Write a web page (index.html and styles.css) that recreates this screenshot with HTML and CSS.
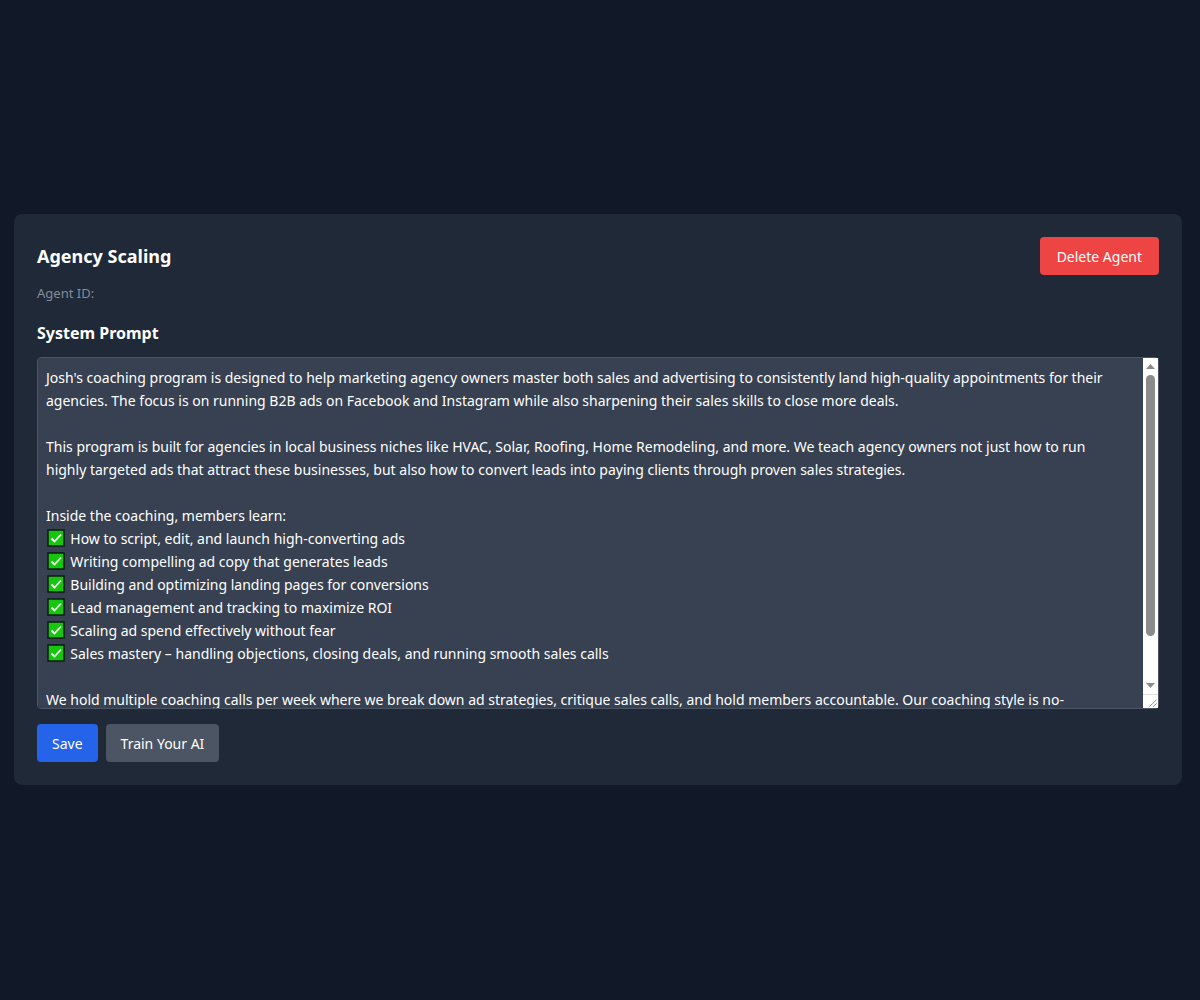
FILE: index.html
```html
<!DOCTYPE html>
<html lang="en">
<head>
    <meta charset="UTF-8">
    <meta name="viewport" content="width=device-width, initial-scale=1.0">
    <title>Agency Scaling</title>
    <link rel="stylesheet" href="styles.css">
</head>
<body>
    <svg class="sprite" aria-hidden="true">
        <symbol id="check" viewBox="0 0 18 18">
            <rect x="1" y="1" width="16" height="16" fill="#16c60c" stroke="#0b1a12" stroke-width="1.500"/>
            <path d="M4.500 9.500l3 3 6.500-7" fill="none" stroke="#f4fff2" stroke-width="1.800"/>
        </symbol>
    </svg>

    <main class="agent-card">
        <header class="agent-header">
            <h1 class="agent-name">Agency Scaling</h1>
            <button type="button" class="btn btn-delete">Delete Agent</button>
        </header>
        <p class="agent-id">Agent ID:</p>

        <form class="prompt-form">
            <label for="prompt" class="prompt-label">System Prompt</label>
            <div class="prompt-box">
                <textarea id="prompt" class="prompt" name="prompt" spellcheck="false">Josh's coaching program is designed to help marketing agency owners master both sales and advertising to consistently land high-quality appointments for their agencies. The focus is on running B2B ads on Facebook and Instagram while also sharpening their sales skills to close more deals.

This program is built for agencies in local business niches like HVAC, Solar, Roofing, Home Remodeling, and more. We teach agency owners not just how to run highly targeted ads that attract these businesses, but also how to convert leads into paying clients through proven sales strategies.

Inside the coaching, members learn:
✅  How to script, edit, and launch high-converting ads
✅  Writing compelling ad copy that generates leads
✅  Building and optimizing landing pages for conversions
✅  Lead management and tracking to maximize ROI
✅  Scaling ad spend effectively without fear
✅  Sales mastery – handling objections, closing deals, and running smooth sales calls

We hold multiple coaching calls per week where we break down ad strategies, critique sales calls, and hold members accountable. Our coaching style is no-nonsense and direct.

</textarea>
                <div class="overlay" aria-hidden="true">
                    <div class="checks" id="checks">
                        <svg class="check"><use href="#check"/></svg>
                        <svg class="check"><use href="#check"/></svg>
                        <svg class="check"><use href="#check"/></svg>
                        <svg class="check"><use href="#check"/></svg>
                        <svg class="check"><use href="#check"/></svg>
                        <svg class="check"><use href="#check"/></svg>
                    </div>
                    <div class="scrollbar">
                        <svg class="arrow" viewBox="0 0 9 5"><path d="M0 5L4.500 0L9 5z"/></svg>
                        <div class="track"><div class="thumb" id="thumb"></div></div>
                        <svg class="arrow" viewBox="0 0 9 5"><path d="M0 0h9L4.500 5z"/></svg>
                        <svg class="grip" viewBox="0 0 15 14"><path d="M6 13L14 5M10 13l4-4"/></svg>
                    </div>
                </div>
            </div>
            <div class="actions">
                <button type="submit" class="btn btn-save">Save</button>
                <button type="button" class="btn btn-train">Train Your AI</button>
            </div>
        </form>
    </main>

    <script>
        const promptText = document.getElementById("prompt");
        const checks = document.getElementById("checks");
        const thumb = document.getElementById("thumb");

        // keep the check marks and the thumb in step with the text
        promptText.addEventListener("scroll", () => {
            const room = thumb.parentElement.clientHeight - thumb.offsetHeight;
            const ratio = promptText.scrollTop / (promptText.scrollHeight - promptText.clientHeight);
            checks.style.transform = `translateY(${-promptText.scrollTop}px)`;
            thumb.style.transform = `translateY(${room * ratio}px)`;
        });
    </script>
</body>
</html>
```
FILE: styles.css
```css
* {
    box-sizing: border-box;
}
body {
    font-family: "Segoe UI", "Noto Sans", "Open Sans", sans-serif;
    font-size: 14px;
    line-height: 23px;
    background-color: #111827;
    color: #fff;
    margin: 0;
    padding: 0 18px 1px 14px;
    min-height: 100vh;
    display: flex;
    align-items: center;
}
.sprite {
    display: none;
}
.agent-card {
    flex: 1;
    min-width: 0;
    padding: 23px;
    border-radius: 8px;
    background-color: #1f2937;
}
.agent-header {
    display: flex;
    justify-content: space-between;
    align-items: center;
}
.agent-name {
    margin: 0;
    font-size: 18px;
    line-height: 27px;
    font-weight: 700;
}
.agent-id {
    margin: 8px 0 17px;
    font-size: 13px;
    line-height: 20px;
    color: #848c99;
}
.prompt-form {
    display: flex;
    flex-direction: column;
}
.prompt-label {
    font-size: 16px;
    line-height: 27px;
    font-weight: 700;
    margin-bottom: 10px;
}
.prompt-box {
    position: relative;
    display: flex;
}
.prompt {
    width: 100%;
    height: 352px;
    padding: 8px 38px 8px 8px;
    border: 1px solid #4b5563;
    border-radius: 4px;
    background-color: #374151;
    color: #fff;
    font: inherit;
    resize: vertical;
    overflow-y: scroll;
    scrollbar-width: none;
}
.overlay {
    position: absolute;
    inset: 1px;
    overflow: hidden;
    pointer-events: none;
}
.checks {
    position: absolute;
    top: 169px;
    left: 7px;
    display: flex;
    flex-direction: column;
}
.check {
    width: 22px;
    height: 23px;
    padding: 2px 2px 3px;
    background-color: #374151;
}
.scrollbar {
    position: absolute;
    top: 0;
    right: 0;
    bottom: 0;
    width: 15px;
    display: flex;
    flex-direction: column;
    align-items: center;
    background-color: #fff;
}
.arrow {
    width: 9px;
    height: 5px;
    margin: 6px 0;
    fill: #8b8b8b;
}
.track {
    flex: 1;
}
.thumb {
    width: 9px;
    height: 261px;
    border-radius: 5px;
    background-color: #8b8b8b;
}
.grip {
    width: 15px;
    height: 14px;
    border-top: 1px solid #dcdcdc;
    fill: none;
    stroke: #8b8b8b;
}
.actions {
    display: flex;
    gap: 8px;
    margin-top: 15px;
}
.btn {
    border: none;
    border-radius: 4px;
    padding: 0 15px;
    height: 38px;
    font: inherit;
    color: #fff;
    cursor: pointer;
}
.btn-delete {
    padding: 0 17px;
    background-color: #ef4444;
}
.btn-save {
    background-color: #2563eb;
}
.btn-train {
    background-color: #4b5563;
}
```
